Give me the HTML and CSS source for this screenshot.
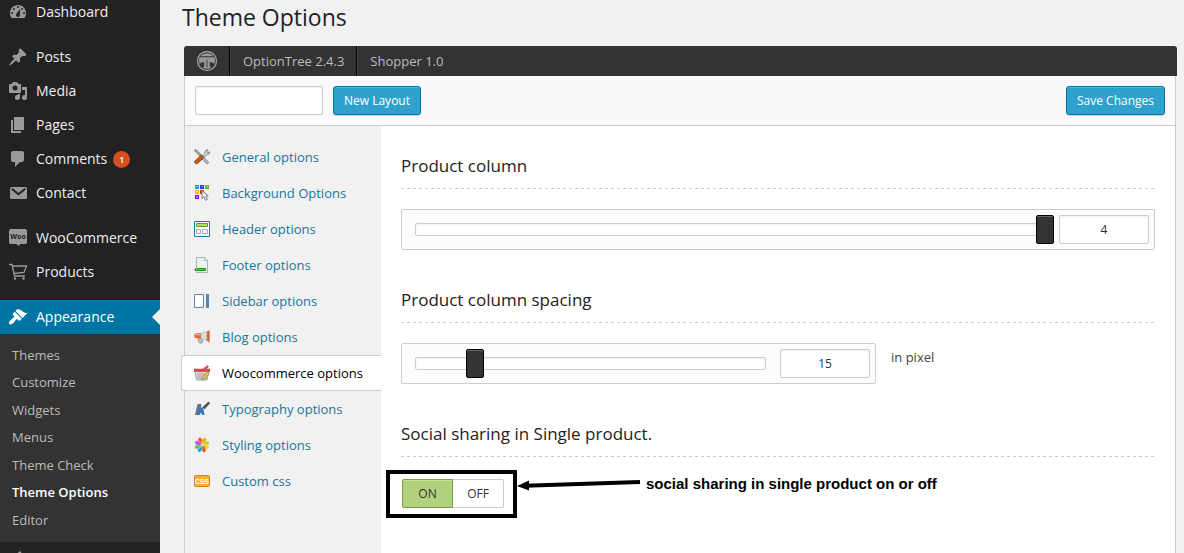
FILE: index.html
```html
<!DOCTYPE html>
<html lang="en">
<head>
<meta charset="utf-8">
<title>Theme Options</title>
<link rel="stylesheet" href="styles.css">
</head>
<body>
<div class="page">
  <nav class="sidebar" aria-label="Admin menu">
    <ul class="menu">
      <li class="menu-first"><a class="menu-link" href="#"><svg class="menu-icon" viewBox="0 0 20 20"><path fill-rule="evenodd" d="M3.76 16h12.48c1.1-1.37 1.76-3.11 1.76-5 0-4.42-3.58-8-8-8s-8 3.58-8 8c0 1.89.66 3.63 1.76 5zM10 4a1 1 0 1 1 0 2 1 1 0 0 1 0-2zM6 6a1 1 0 1 1 0 2 1 1 0 0 1 0-2zm8 0a1 1 0 1 1 0 2 1 1 0 0 1 0-2zm-5.37 5.55L12 7v6a2 2 0 1 1-3.37-1.45zM4 10a1 1 0 1 1 0 2 1 1 0 0 1 0-2zm12 0a1 1 0 1 1 0 2 1 1 0 0 1 0-2z"/></svg>Dashboard</a></li>
      <li><a class="menu-link" href="#"><svg class="menu-icon" viewBox="0 0 20 20"><path d="M10.44 3.02l1.82-1.82 6.36 6.35-1.83 1.82c-1.05-.68-2.48-.57-3.41.36l-.75.75c-.92.93-1.04 2.35-.35 3.41l-1.83 1.82-2.41-2.41-2.8 2.79c-.42.42-3.38 2.71-3.8 2.29s1.86-3.39 2.28-3.81l2.79-2.79L4.1 9.36l1.83-1.82c1.05.69 2.48.57 3.4-.36l.75-.75c.93-.92 1.05-2.35.36-3.41z"/></svg>Posts</a></li>
      <li><a class="menu-link" href="#"><svg class="menu-icon" viewBox="0 0 20 20"><path fill-rule="evenodd" d="M13 11V4c0-.55-.45-1-1-1h-1.67L9 1H5L3.67 3H2c-.55 0-1 .45-1 1v7c0 .55.45 1 1 1h10c.55 0 1-.45 1-1zM7 4.5a2.5 2.5 0 1 1 0 5 2.5 2.5 0 0 1 0-5zM14 6h5v10.500a2.500 2.500 0 1 1-2-2.450V9h-3V6zm-4 8.050V13h2v3.500a2.500 2.500 0 1 1-2-2.450z"/></svg>Media</a></li>
      <li><a class="menu-link" href="#"><svg class="menu-icon" viewBox="0 0 20 20"><path d="M6 15V2h10v13H6zm-1 1h8v2H3V5h2v11z"/></svg>Pages</a></li>
      <li><a class="menu-link" href="#"><svg class="menu-icon" viewBox="0 0 20 20"><path d="M5 2h9c1.100 0 2 .9 2 2v7c0 1.100-.9 2-2 2h-2l-5 5v-5H5c-1.100 0-2-.9-2-2V4c0-1.100.9-2 2-2z"/></svg>Comments<span class="badge">1</span></a></li>
      <li><a class="menu-link" href="#"><svg class="menu-icon" viewBox="0 0 20 20"><path d="M3.500 4h14A1.500 1.500 0 0 1 19 5.500v9a1.500 1.500 0 0 1-1.500 1.500h-14A1.500 1.500 0 0 1 2 14.500v-9A1.500 1.500 0 0 1 3.500 4z"/><path class="icon-cut" d="m3.800 5.800 6.700 5.400 6.700-5.400"/></svg>Contact</a></li>
      <li class="menu-gap"><a class="menu-link" href="#"><svg class="menu-icon" viewBox="0 0 20 20"><path d="M3 1h14a2 2 0 0 1 2 2v11a2 2 0 0 1-2 2h-5l-1 2-3-2H3a2 2 0 0 1-2-2V3a2 2 0 0 1 2-2z"/><text class="woo-text" x="10" y="11" text-anchor="middle">Woo</text></svg>WooCommerce</a></li>
      <li><a class="menu-link" href="#"><svg class="menu-icon" viewBox="0 0 20 20"><path class="icon-line" d="M1 2.500h3l2.500 11.500h10.500M4.500 4h14l-2.500 6.500-10 1"/><circle cx="7" cy="16.500" r="1.300"/><circle cx="15.500" cy="16.500" r="1.300"/></svg>Products</a></li>
      <li class="menu-gap"><a class="menu-link menu-current" href="#"><svg class="menu-icon" viewBox="0 0 20 20"><path d="M14.480 11.060L7.410 3.990l1.500-1.500c.5-.56 2.300-.47 3.510.32 1.210.8 1.430 1.280 2.910 2.100 1.180.64 2.450 1.260 4.450.85zm-.71.71L6.700 4.700 4.930 6.470c-.39.39-.39 1.020 0 1.410l1.060 1.060c.39.39.39 1.030 0 1.420-.6.6-1.430 1.110-2.210 1.690-.35.26-.7.53-1.010.84C1.430 14.230.4 16.080 1.400 17.070c.99 1 2.840-.03 4.180-1.360.31-.31.58-.66.85-1.020.57-.78 1.080-1.610 1.690-2.210.39-.39 1.020-.39 1.410 0l1.060 1.060c.39.39 1.020.39 1.410 0z"/></svg>Appearance</a>
        <ul class="submenu">
          <li><a href="#">Themes</a></li>
          <li><a href="#">Customize</a></li>
          <li><a href="#">Widgets</a></li>
          <li><a href="#">Menus</a></li>
          <li><a href="#">Theme Check</a></li>
          <li><a class="submenu-current" href="#">Theme Options</a></li>
          <li><a href="#">Editor</a></li>
        </ul>
      </li>
      <li><div class="menu-link"><svg class="menu-icon" viewBox="0 0 20 20"><path d="M13.110 4.360L9.870 7.600 8 5.730l3.240-3.240c.35-.34 1.050-.2 1.560.32.52.51.66 1.210.31 1.550zM5 6l1-1 9 9-1 1c-1 1-3 1-4 1H6l-3 3-2-2 3-3v-4c0-1 0-3 1-4z"/></svg></div></li>
    </ul>
  </nav>

  <main class="main">
    <h1 class="title">Theme Options</h1>
    <div class="bar">
      <div class="bar-cell"><svg class="logo" viewBox="0 0 22 22"><circle cx="11" cy="11" r="9.500" fill="none" stroke="#999" stroke-width="1.400"/><path fill="#999" d="M4.500 6.200C6 4.300 8.300 3.200 11 3.200s5 1.100 6.500 3zM3.500 7.200h15c.8 2.300.6 5-.4 7-.6-1.600-1.500-1.700-2.600-1.700-1 0-1.300-.2-1.700-.9V16l1.400 1.700c-2 1.300-6.400 1.300-8.400 0L8.200 16v-4.400c-.4.7-.7.9-1.700.9-1.100 0-2 .1-2.600 1.700-1-2-1.200-4.700-.4-7z"/><path stroke="#444" stroke-width="1" d="M11 9.500v8"/></svg></div>
      <div class="bar-cell">OptionTree 2.4.3</div>
      <div class="bar-cell bar-last">Shopper 1.0</div>
    </div>
    <div class="panel">
      <div class="toolbar">
        <input class="field layout-name" type="text" aria-label="Layout name">
        <button class="button" type="button">New Layout</button>
        <button class="button button-save" type="button">Save Changes</button>
      </div>
      <div class="columns">
        <ul class="tabs">
          <li><a class="tab" href="#"><svg class="tab-icon" viewBox="0 0 16 16"><path d="M.5 1.500 2 .5l6 6-1.500 1.500z" fill="#a5b0b0" stroke="#59625f" stroke-width=".7"/><path d="m8.500 7.500 5.500 5c1 1 0 2.700-1.300 2L7 9z" fill="#bfcaca" stroke="#566" stroke-width=".8"/><path d="M9 6.500 11 4.200C10.500 2 12 .3 14 .8L12.700 2.500l1 1.200 1.900-1c.2 2-1 3.300-3 3.100L10.500 8z" fill="#d5dddb" stroke="#687674" stroke-width=".8"/><path d="m1 12 6.500-6 2.500 2.500-6.500 6c-1.700 1-3.500-.9-2.500-2.500z" fill="#c05f1c" stroke="#6f310d" stroke-width=".8"/></svg>General options</a></li>
          <li><a class="tab" href="#"><svg class="tab-icon" viewBox="0 0 16 16"><path fill="#1f9fea" d="M1 0h4v4H1z"/><path fill="#2340d8" d="M6 0h4v4H6z"/><path fill="#6ab500" d="M11 0h4v4h-4z"/><path fill="#f4c400" d="M1 5h4v4H1z"/><path fill="#e3341f" d="M6 5h4v4H6z"/><path fill="#9600ef" d="M1 10h4v4H1z"/><path fill="#fff" opacity=".4" d="M2 1h2v1H2zM7 1h2v1H7zM12 1h2v1h-2zM2 6h2v1H2zM2 11h2v2H2z"/><path fill="#eee" stroke="#777" stroke-width=".9" d="M8 5.500v8l2-1.700 1.500 3.500 1.800-.8-1.500-3.300 2.400-.2z"/></svg>Background Options</a></li>
          <li><a class="tab" href="#"><svg class="tab-icon" viewBox="0 0 16 16"><path fill="#fff" stroke="#1f78a8" d="M.5.5h15v15H.5z"/><path fill="#b5dc69" stroke="#5a9e21" d="M2.500 2.500h11v3h-11z"/><path fill="#f5f5f5" stroke="#aaa" d="M2.500 8.500h4v4h-4zM8.500 8.500h5v4h-5z"/></svg>Header options</a></li>
          <li><a class="tab" href="#"><svg class="tab-icon" viewBox="0 0 16 16"><path fill="#e9f1ee" stroke="#a5b5b5" d="M2.500.500h8l3 3v12h-11z"/><path fill="#fff" stroke="#9aabab" stroke-width=".7" d="M10.500.5v3h3z"/><path fill="#3fdc3f" stroke="#179617" d="M3.500 11.500h8v2h-8zM1 12h1v1.500H1z"/></svg>Footer options</a></li>
          <li><a class="tab" href="#"><svg class="tab-icon" viewBox="0 0 16 16"><path fill="#fff" stroke="#5d86ae" d="M.5 1.500h9v13h-9z"/><path fill="#5d86ae" d="M12 1h3v14h-3z"/></svg>Sidebar options</a></li>
          <li><a class="tab" href="#"><svg class="tab-icon" viewBox="0 0 16 16"><path fill="#bbb" stroke="#888" stroke-width=".6" d="m4 9 4 .5.800 3.500-2 1.500-2-1z"/><path fill="#e2672f" d="M1 4.500 7 4v5.500l-6-.5c-1-1-1-3.500 0-4.500z"/><path fill="#ddd" stroke="#aaa" stroke-width=".6" d="m7 4 6-1.500v9L7 9.500z"/><path fill="#b9674a" stroke="#e8935f" stroke-width=".8" d="M13 2.500 15.500 1.500v12L13 11.500z"/><path fill="#f6a77b" d="M1 5h6v1.200H1z"/></svg>Blog options</a></li>
          <li><a class="tab tab-current" href="#"><svg class="tab-icon" viewBox="0 0 16 16"><path fill="#fff" stroke="#8a8a8a" stroke-width=".8" d="m1 6 1.500 9h10.500l2-9z"/><path fill="none" stroke="#999" stroke-width=".8" d="M4 7v8M6 7v8M8 7v8M10 7v8M12 7v8M2 9h12M2 11h11M2 13h11"/><path fill="#e54a4a" stroke="#bd2c2c" stroke-width=".5" d="M0 4h9L13.500.5l1 1.200L12 4h4v2.500H0z"/><path fill="#f2ce44" stroke="#7d6828" stroke-width=".6" d="m13.500 7 1.800 1.500-5 5.500-2.300 1 .5-2.500z"/></svg>Woocommerce options</a></li>
          <li><a class="tab" href="#"><svg class="tab-icon" viewBox="0 0 16 16"><path fill="#667482" d="M1 14 3.500 3h4L6 14z"/><path fill="#2b78cd" d="M4 13c.5-3 2-6 5-7l1.500 8H8l-.5-2z"/><path fill="#555" stroke="#333" stroke-width=".6" d="m9 6 5.500-5 1.200 1.300L10.500 8z"/></svg>Typography options</a></li>
          <li><a class="tab" href="#"><svg class="tab-icon" viewBox="0 0 16 16"><g stroke="#fff" stroke-width=".3"><ellipse cx="8" cy="3.700" rx="2.200" ry="3.500" fill="#f04a2e" transform="rotate(-20 8 8)"/><ellipse cx="8" cy="3.700" rx="2.200" ry="3.500" fill="#f6a21d" transform="rotate(25 8 8)"/><ellipse cx="8" cy="3.700" rx="2.200" ry="3.500" fill="#b6d81b" transform="rotate(70 8 8)"/><ellipse cx="8" cy="3.700" rx="2.200" ry="3.500" fill="#f3d51b" transform="rotate(115 8 8)"/><ellipse cx="8" cy="3.700" rx="2.200" ry="3.500" fill="#ef5a1a" transform="rotate(160 8 8)"/><ellipse cx="8" cy="3.700" rx="2.200" ry="3.500" fill="#2b9be2" transform="rotate(205 8 8)"/><ellipse cx="8" cy="3.700" rx="2.200" ry="3.500" fill="#6bc43c" transform="rotate(250 8 8)"/><ellipse cx="8" cy="3.700" rx="2.200" ry="3.500" fill="#b75be0" transform="rotate(295 8 8)"/></g></svg>Styling options</a></li>
          <li><a class="tab" href="#"><svg class="tab-icon" viewBox="0 0 16 16"><rect x=".5" y="2.500" width="15" height="11" rx="1" fill="#f9ae35" stroke="#d27f1e"/><text class="css-text" x="8" y="11" text-anchor="middle">CSS</text></svg>Custom css</a></li>
        </ul>

        <div class="settings">
          <section class="setting">
            <h2 class="setting-title" id="columns-title">Product column</h2>
            <div class="slider">
              <div class="track"><input class="range" type="range" min="1" max="4" value="4" aria-labelledby="columns-title"></div>
              <input class="field amount" type="text" value="4" aria-labelledby="columns-title">
            </div>
          </section>
          <section class="setting">
            <h2 class="setting-title" id="spacing-title">Product column spacing</h2>
            <div class="setting-row">
              <div class="slider">
                <div class="track"><input class="range" type="range" min="0" max="88" value="15" aria-labelledby="spacing-title"></div>
                <input class="field amount" type="text" value="15" aria-labelledby="spacing-title">
              </div>
              <p class="hint">in pixel</p>
            </div>
          </section>
          <section class="setting">
            <h2 class="setting-title">Social sharing in Single product.</h2>
            <div class="switch-area">
              <div class="switch">
                <input class="switch-input" type="radio" name="sharing" id="sharing-on" checked>
                <label class="switch-label switch-on" for="sharing-on">ON</label>
                <input class="switch-input" type="radio" name="sharing" id="sharing-off">
                <label class="switch-label switch-off" for="sharing-off">OFF</label>
              </div>
              <div class="callout">
                <svg class="arrow" viewBox="0 0 124 14"><path d="m8 8.800 115-3.800" stroke="#000" stroke-width="4"/><path d="M0 9 12 3.500v10z"/></svg>
                <span>social sharing in single product on or off</span>
              </div>
            </div>
          </section>
        </div>
      </div>
    </div>
  </main>
</div>
</body>
</html>
```

FILE: styles.css
```css
* { box-sizing: border-box; }

body {
  margin: 0;
  height: 100vh;
  overflow: hidden;
  background: #f1f1f1;
  color: #444;
  font: 13px/18px "Open Sans", "Noto Sans", sans-serif;
}

ul, h1, h2, p { margin: 0; padding: 0; list-style: none; font-weight: 400; }
a { text-decoration: none; }
input, button { font-family: inherit; margin: 0; }

.page { display: flex; min-height: 100vh; }

/* Admin menu */
.sidebar { flex: 0 0 160px; background: #222; }
.menu-link {
  position: relative;
  display: flex;
  align-items: center;
  gap: 8px;
  height: 34px;
  padding-left: 8px;
  color: #eee;
  font-size: 14px;
}
.menu-first { padding-bottom: 16px; }
.menu-first .menu-link { height: 24px; }
.menu-gap { margin-top: 11px; }
.menu-icon { flex: none; width: 20px; height: 20px; fill: #999; }
.menu-current { background: #0074a2; color: #fff; }
.menu-current .menu-icon { fill: #fff; }
.menu-current::after {
  content: "";
  position: absolute;
  right: 0;
  top: 9px;
  border: 8px solid transparent;
  border-left: 0;
  border-right-color: #f1f1f1;
}
.icon-cut { fill: none; stroke: #222; stroke-width: 2; }
.icon-line { fill: none; stroke: #999; stroke-width: 1.3; }
.woo-text { fill: #222; font: bold 7px "Open Sans", sans-serif; }
.badge {
  width: 17px;
  height: 17px;
  margin-left: -2px;
  border-radius: 50%;
  background: #d54e21;
  color: #fff;
  font-size: 9px;
  font-weight: 600;
  line-height: 17px;
  text-align: center;
}
.submenu { padding: 8px 12px; background: #333; }
.submenu li { line-height: 27px; }
.submenu li:nth-child(even) { padding-bottom: 1px; }
.submenu a { color: #bbb; }
.submenu .submenu-current { color: #fff; font-weight: 600; }

/* Page header */
.main { display: flex; flex: 1; flex-direction: column; min-width: 0; padding: 0 7px 0 24px; }
.title {
  margin-left: -2px;
  padding: 2px 0 14px;
  color: #222;
  font-size: 23px;
  line-height: 30px;
}
.bar { display: flex; height: 30px; border-radius: 3px 3px 0 0; background: #333; }
.bar-cell {
  display: flex;
  align-items: center;
  padding: 0 12px;
  border-right: 1px solid #000;
  border-left: 1px solid #444;
  color: #bbb;
}
.bar-cell:first-child { padding: 0 11px; border-left-color: transparent; }
.bar-last { border-right: 0; }
.logo { width: 22px; height: 22px; }

/* Panel */
.panel {
  display: flex;
  flex: 1;
  flex-direction: column;
  margin-right: 1px;
  border: 1px solid #ccc;
  border-width: 0 1px;
}
.toolbar {
  display: flex;
  gap: 10px;
  padding: 10px;
  border-bottom: 1px solid #ccc;
  background: #fafafa;
}
.field {
  height: 29px;
  border: 1px solid #ccc;
  border-radius: 2px;
  background: #fff;
  box-shadow: inset 0 1px 2px rgba(0, 0, 0, .07);
  color: #333;
}
.layout-name { width: 128px; }
.button {
  height: 29px;
  padding: 0 10px;
  border: 1px solid #0074a2;
  border-radius: 3px;
  background: #2ea2cc;
  box-shadow: inset 0 1px 0 rgba(120, 200, 230, .5), 0 1px 0 rgba(0, 0, 0, .15);
  color: #fff;
  font-size: 12px;
}
.button-save { margin-left: auto; }
.columns { display: flex; flex: 1; }

.tabs { flex: 0 0 196px; padding-top: 13px; }
.tab {
  display: flex;
  align-items: center;
  gap: 12px;
  height: 36px;
  padding-left: 9px;
  color: #21759b;
}
.tab-icon { width: 16px; height: 16px; }
.tab-current {
  margin-left: -4px;
  padding-left: 12px;
  border: 1px solid #ccc;
  border-right: 0;
  border-radius: 3px 0 0 3px;
  background: #fff;
  color: #000;
}
.css-text { fill: #fff; font: bold 7px "Liberation Sans", sans-serif; }

/* Settings */
.settings { flex: 1; min-width: 0; padding: 28px 20px 0; background: #fff; }
.setting { margin-bottom: 38px; }
.setting-title {
  margin-bottom: 20px;
  padding-bottom: 12px;
  background: repeating-linear-gradient(90deg, #ccc 0 3px, transparent 3px 6px) 0 100% / 100% 1px no-repeat;
  color: #222;
  font-size: 17px;
  line-height: 23px;
}
.setting-row { display: flex; gap: 15px; }
.setting-row .slider { flex: 0 0 63%; }
.slider {
  display: flex;
  align-items: center;
  gap: 14px;
  padding: 5px 5px 5px 13px;
  border: 1px solid #ccc;
  border-radius: 2px;
  background: #fcfcfc;
}
.track {
  display: flex;
  flex: 1;
  align-items: center;
  height: 13px;
  border: 1px solid #ccc;
  border-radius: 2px;
  background: #fff;
  box-shadow: inset 0 1px 2px rgba(0, 0, 0, .07);
}
.range {
  flex: 1;
  height: 29px;
  margin: 0 -10px;
  background: none;
  appearance: none;
}
.range::-webkit-slider-thumb {
  width: 18px;
  height: 29px;
  border: 1px solid #000;
  border-radius: 2px;
  background: #333;
  box-shadow: inset 0 1px 0 #666;
  appearance: none;
}
.amount { width: 90px; font-size: 12px; text-align: center; }
.hint { padding-top: 5px; }

.switch-area { display: flex; align-items: flex-start; gap: 13px; padding: 0 1px; }
.switch { position: relative; display: flex; width: 102px; margin-top: 2px; }
/* Highlight frame around the switch */
.switch::after {
  content: "";
  position: absolute;
  inset: -9px -13px -10px -16px;
  border: 4px solid #000;
  pointer-events: none;
}
.switch-input { position: absolute; opacity: 0; }
.switch-label {
  flex: none;
  width: 50%;
  height: 29px;
  border: 1px solid #ccc;
  background: #fff;
  color: #333;
  font-size: 12px;
  line-height: 28px;
  text-align: center;
}
.switch-on { border-radius: 2px 0 0 2px; }
.switch-off { border-left: 0; border-radius: 0 2px 2px 0; }
.switch-input:checked + .switch-label {
  border: 1px solid #7b9c47;
  background: #b1d27c;
  box-shadow: inset 0 1px 0 #c5e494;
}
.callout {
  display: flex;
  align-items: center;
  gap: 5px;
  color: #000;
  font: bold 15px/14px "Liberation Sans", Arial, sans-serif;
}
.arrow { flex: none; width: 124px; height: 14px; }
```
